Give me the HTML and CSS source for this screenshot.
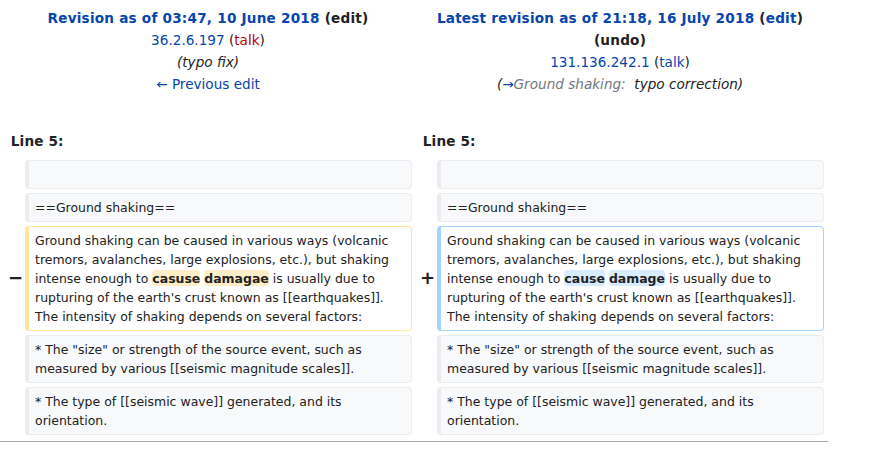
FILE: index.html
```html
<!DOCTYPE html>
<html lang="en">
<head>
<meta charset="utf-8">
<title>Difference between revisions</title>
<link rel="stylesheet" href="styles.css">
</head>
<body>
<table class="diff">
  <colgroup>
    <col class="col-marker">
    <col class="col-content">
    <col class="col-marker">
    <col class="col-content">
  </colgroup>
  <tr class="diff-title">
    <td colspan="2" class="diff-otitle">
      <div class="rev-title"><a class="link">Revision as of 03:47, 10 June 2018</a> <span class="paren">(<a class="visited">edit</a>)</span></div>
      <div><a class="link">36.2.6.197</a> <span class="paren">(<a class="new">talk</a>)</span></div>
      <div class="comment">(typo fix)</div>
      <div><a class="link">← Previous edit</a></div>
    </td>
    <td colspan="2" class="diff-ntitle">
      <div class="rev-title"><a class="link">Latest revision as of 21:18, 16 July 2018</a> <span class="paren">(<a class="link">edit</a>)</span></div>
      <div class="rev-title"><span class="paren">(<a class="visited">undo</a>)</span></div>
      <div><a class="link">131.136.242.1</a> <span class="paren">(<a class="link">talk</a>)</span></div>
      <div class="comment">(<span class="autocomment"><a class="link">→</a>Ground shaking: </span>&nbsp;typo correction)</div>
    </td>
  </tr>
  <tr class="diff-spacer"><td colspan="4"></td></tr>
  <tr>
    <td colspan="2" class="diff-lineno">Line 5:</td>
    <td colspan="2" class="diff-lineno">Line 5:</td>
  </tr>
  <tr>
    <td class="diff-marker"></td>
    <td class="diff-context"><div><br></div></td>
    <td class="diff-marker"></td>
    <td class="diff-context"><div><br></div></td>
  </tr>
  <tr>
    <td class="diff-marker"></td>
    <td class="diff-context"><div>==Ground shaking==</div></td>
    <td class="diff-marker"></td>
    <td class="diff-context"><div>==Ground shaking==</div></td>
  </tr>
  <tr>
    <td class="diff-marker"><span class="marker-glyph">−</span></td>
    <td class="diff-deletedline"><div>Ground shaking can be caused in various ways (volcanic tremors, avalanches, large explosions, etc.), but shaking intense enough to <del class="diffchange">casuse</del> <del class="diffchange">damagae</del> is usually due to rupturing of the earth's crust known as [[earthquakes]]. The intensity of shaking depends on several factors:</div></td>
    <td class="diff-marker"><span class="marker-glyph">+</span></td>
    <td class="diff-addedline"><div>Ground shaking can be caused in various ways (volcanic tremors, avalanches, large explosions, etc.), but shaking intense enough to <ins class="diffchange">cause</ins> <ins class="diffchange">damage</ins> is usually due to rupturing of the earth's crust known as [[earthquakes]]. The intensity of shaking depends on several factors:</div></td>
  </tr>
  <tr>
    <td class="diff-marker"></td>
    <td class="diff-context"><div>* The "size" or strength of the source event, such as measured by various [[seismic magnitude scales]].</div></td>
    <td class="diff-marker"></td>
    <td class="diff-context"><div>* The "size" or strength of the source event, such as measured by various [[seismic magnitude scales]].</div></td>
  </tr>
  <tr>
    <td class="diff-marker"></td>
    <td class="diff-context"><div>* The type of [[seismic wave]] generated, and its orientation.</div></td>
    <td class="diff-marker"></td>
    <td class="diff-context"><div>* The type of [[seismic wave]] generated, and its orientation.</div></td>
  </tr>
</table>
<div class="diff-end"></div>
</body>
</html>
```
FILE: styles.css
```css
html, body {
  margin: 0;
  padding: 0;
  background: #ffffff;
}

body {
  font-family: "DejaVu Sans", "Liberation Sans", sans-serif;
  font-size: 13.6px;
  color: #222222;
}

table.diff {
  width: 828px;
  table-layout: fixed;
  border-spacing: 4px;
  border: 0;
  margin: 0;
  background: #ffffff;
}

.col-marker { width: 17px; }
.col-content { width: 387px; }

table.diff td {
  padding: 0.33em 0.5em;
  box-sizing: border-box;
}

.diff-otitle,
.diff-ntitle {
  text-align: center;
  vertical-align: top;
  line-height: 1.6;
}

.rev-title {
  font-weight: bold;
  letter-spacing: 0.22px;
}

.link { color: #0645ad; text-decoration: none; }
.visited { color: #222222; text-decoration: none; }
.new { color: #ba0000; text-decoration: none; }
.paren { color: #222222; }

.comment {
  font-style: italic;
  color: #222222;
}

.autocomment {
  color: #72777d;
}

.diff-spacer td {
  height: 17px;
  padding: 0 !important;
}

table.diff td.diff-lineno {
  font-weight: bold;
  line-height: 1.6;
  padding: 6.5px 0.5em 2.5px;
  letter-spacing: 0.15px;
}

table.diff td.diff-marker {
  text-align: right;
  font-weight: bold;
  font-size: 18px;
  line-height: 1.2;
  padding: 0.25em 0 0.25em 0;
  vertical-align: middle;
  color: #202122;
}

.marker-glyph {
  margin-right: -2px;
}

.diff-context,
.diff-deletedline,
.diff-addedline {
  font-size: 12.48px;
  line-height: 19px;
  vertical-align: top;
  white-space: pre-wrap;
  word-wrap: break-word;
  border-style: solid;
  border-width: 1px 1px 1px 4px;
  border-radius: 4px;
  color: #222222;
}

table.diff td.diff-context,
table.diff td.diff-deletedline,
table.diff td.diff-addedline {
  padding: 4px 6px;
}

.diff-context {
  background: #f8f9fa;
  border-color: #eaecf0;
}

.diff-deletedline {
  border-color: #ffe49c;
}

.diff-addedline {
  border-color: #a3d3ff;
}

.diffchange {
  font-weight: bold;
  text-decoration: none;
  border-radius: 4px;
  padding: 0.05em 0;
}

.diff-deletedline .diffchange {
  background: #feeec8;
}

.diff-addedline .diffchange {
  background: #d8ecff;
}

.diff-end {
  width: 828px;
  margin-top: 2px;
  border-top: 1px solid #a2a9b1;
}
```
